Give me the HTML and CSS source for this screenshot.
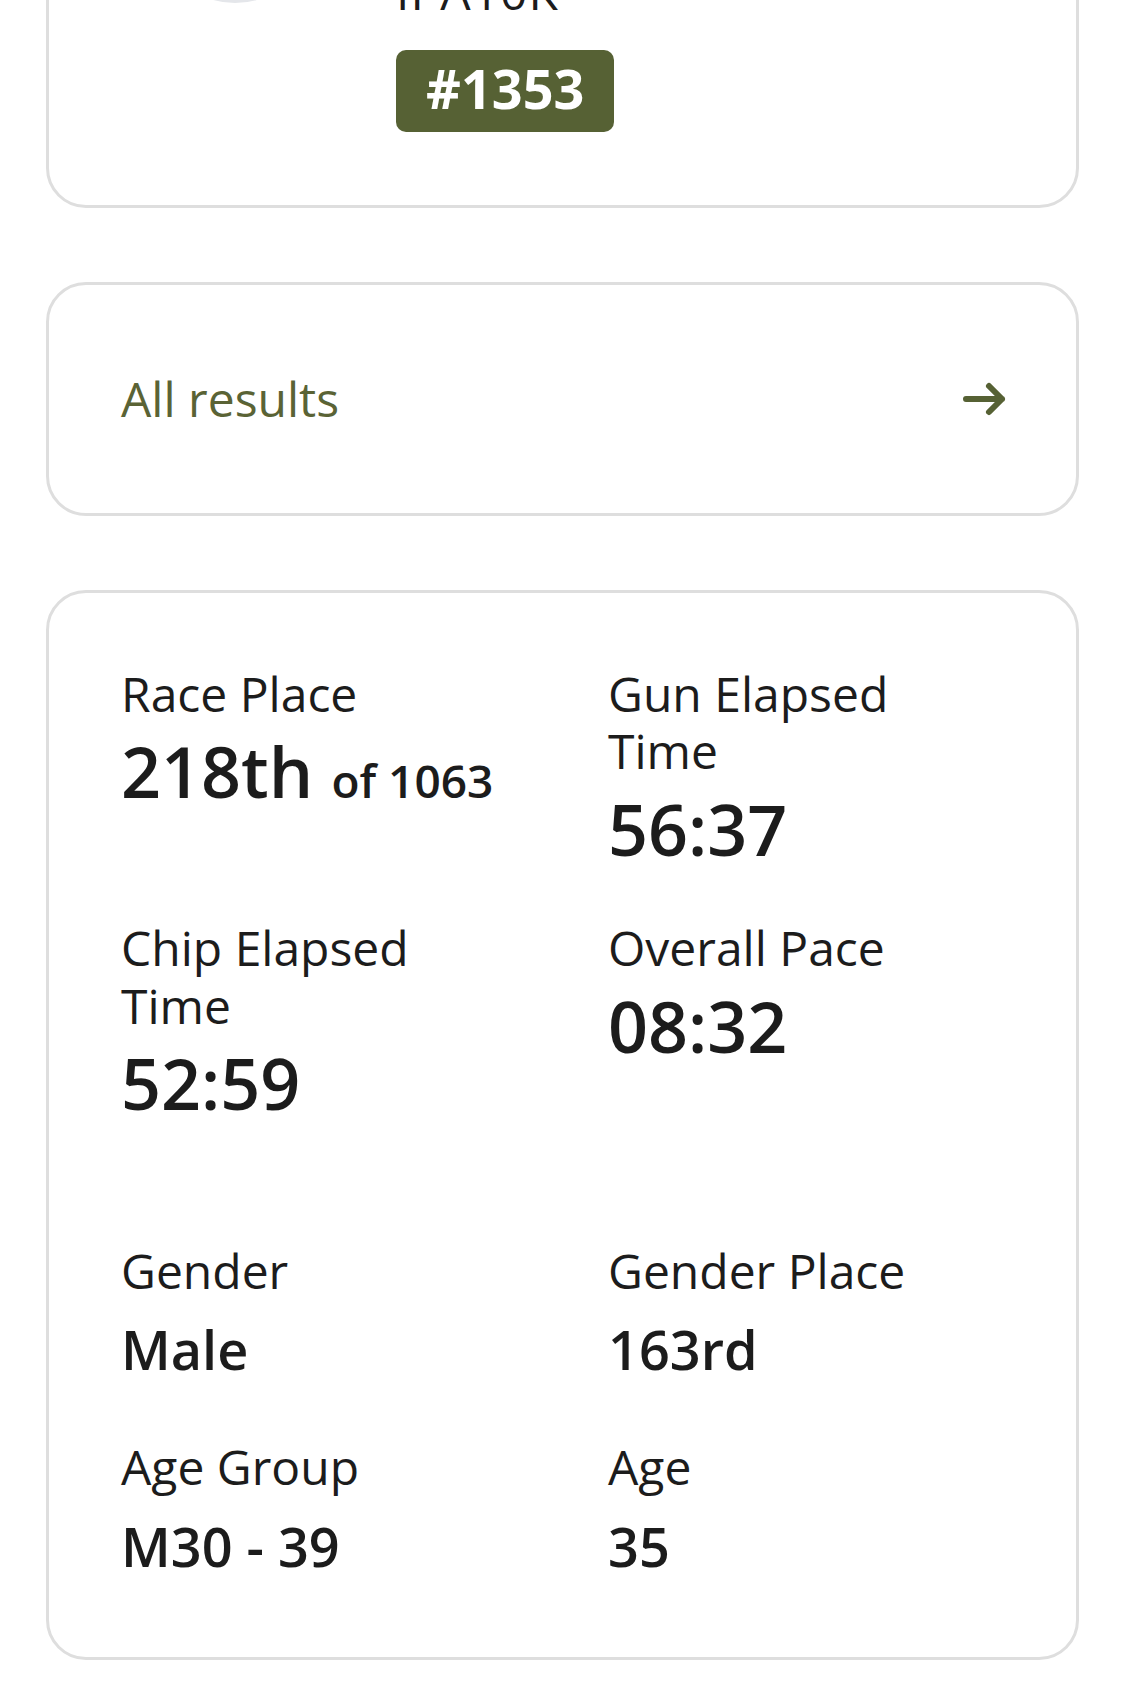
FILE: index.html
```html
<!DOCTYPE html>
<html lang="en">
<head>
<meta charset="utf-8">
<title>Result</title>
<link rel="stylesheet" href="styles.css">
</head>
<body>
<div class="page">
  <section class="card profile">
    <div class="avatar"></div>
    <div class="info">
      <div class="event">IPA10K</div>
      <div class="bib">#1353</div>
    </div>
  </section>

  <a class="card link" href="#">
    <span>All results</span>
    <svg class="arrow" width="48" height="36" viewBox="0 0 48 36" aria-hidden="true">
      <path d="M6 18H42M29 5L42 18L29 31" fill="none" stroke="currentColor" stroke-width="6" stroke-linecap="round" stroke-linejoin="round"/>
    </svg>
  </a>

  <section class="card stats">
    <div class="grid grid-top">
      <div class="stat">
        <div class="label">Race Place</div>
        <div class="value">218th <span class="of">of 1063</span></div>
      </div>
      <div class="stat">
        <div class="label">Gun Elapsed Time</div>
        <div class="value">56:37</div>
      </div>
      <div class="stat">
        <div class="label">Chip Elapsed Time</div>
        <div class="value">52:59</div>
      </div>
      <div class="stat">
        <div class="label">Overall Pace</div>
        <div class="value">08:32</div>
      </div>
    </div>
    <div class="grid grid-bottom">
      <div class="stat">
        <div class="label">Gender</div>
        <div class="value">Male</div>
      </div>
      <div class="stat">
        <div class="label">Gender Place</div>
        <div class="value">163rd</div>
      </div>
      <div class="stat">
        <div class="label">Age Group</div>
        <div class="value">M30 - 39</div>
      </div>
      <div class="stat">
        <div class="label">Age</div>
        <div class="value">35</div>
      </div>
    </div>
  </section>
</div>
</body>
</html>
```

FILE: styles.css
```css
* { box-sizing: border-box; }

html, body {
  margin: 0;
  padding: 0;
  background: #ffffff;
}

body {
  font-family: "Open Sans", "Noto Sans", "Liberation Sans", sans-serif;
  color: #1c1c1c;
  overflow: hidden;
}

.page {
  display: flex;
  flex-direction: column;
  gap: 74px;
  padding: 0 46px;
}

.card {
  background: #ffffff;
  border: 3px solid #dedede;
  border-radius: 40px;
}

/* profile card (scrolled partly out of view) */
.profile {
  margin-top: -222px;
  display: flex;
  align-items: flex-start;
  gap: 86px;
  padding: 72px 72px 73px 111px;
}

.avatar {
  width: 150px;
  height: 150px;
  border-radius: 50%;
  border: 3px solid #e4e6ea;
  background: #f6f7f8;
  flex: none;
}

.info {
  padding-top: 110px;
}

.event {
  font-size: 48px;
  line-height: 57.6px;
  font-weight: 400;
  letter-spacing: 1px;
}

.bib {
  display: inline-block;
  margin-top: 29px;
  background: #566134;
  color: #ffffff;
  font-size: 54px;
  font-weight: 700;
  line-height: 66px;
  padding: 5px 30px 11px;
  border-radius: 10px;
}

/* link card */
.link {
  height: 234px;
  display: flex;
  align-items: center;
  justify-content: space-between;
  padding: 0 68px 0 72px;
  color: #5a6335;
  font-size: 48px;
  line-height: 57.6px;
  text-decoration: none;
}

.arrow {
  display: block;
  color: #566134;
}

/* stats card */
.stats {
  padding: 72px 72px 78px;
}

.grid {
  display: grid;
  grid-template-columns: 380px 1fr;
  column-gap: 107px;
}

.grid-top {
  row-gap: 47px;
}

.grid-bottom {
  margin-top: 115px;
  row-gap: 56px;
}

.label {
  font-size: 48px;
  line-height: 57.6px;
  font-weight: 400;
  max-width: 360px;
  margin-bottom: 6px;
}

.value {
  font-size: 70px;
  line-height: 86.4px;
  font-weight: 600;
  white-space: nowrap;
}

.of {
  font-size: 46px;
  font-weight: 600;
}

.grid-bottom .label {
  margin-bottom: 18px;
}

.grid-bottom .value {
  font-size: 54px;
  line-height: 64.8px;
}
```
